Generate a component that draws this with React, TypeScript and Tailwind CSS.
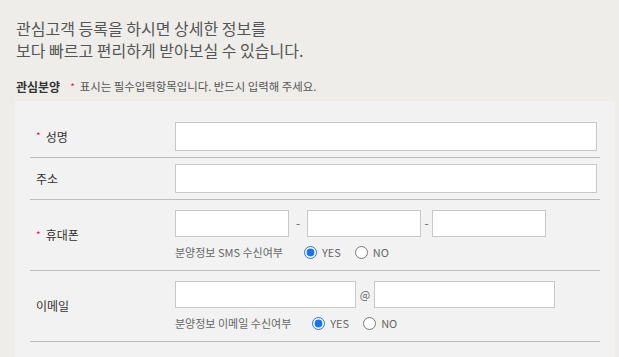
import React from 'react';

const font = { fontFamily: '"Noto Sans CJK KR", "Noto Sans", sans-serif' };

const Star = () => <span className="text-[#e5185c] text-[10px] mr-[5px] relative top-[-1px]">*</span>;

const Input = ({ w }: { w: string }) => (
  <input type="text" className={`${w} h-[27px] bg-white border border-[#c8c8c8] outline-none`} />
);

const Consent = ({ label, name }: { label: string; name: string }) => (
  <div className="flex items-center h-[17px] mt-[7px] text-[11px] text-[#666]">
    <span className="mr-[21px]">{label}</span>
    <label className="flex items-center mr-[14px]">
      <input type="radio" name={name} defaultChecked className="w-[13px] h-[13px] m-0 mr-[5px] accent-[#1a73e8]" />
      YES
    </label>
    <label className="flex items-center">
      <input type="radio" name={name} className="w-[13px] h-[13px] m-0 mr-[5px]" />
      NO
    </label>
  </div>
);

export default function App() {
  return (
    <div className="w-[619px] h-[357px] overflow-hidden bg-[#eeede9]" style={font}>
      <div className="pt-[17px] pl-[16px] text-[16px] text-[#555]">
        <div className="h-[22px] leading-[22px]">관심고객 등록을 하시면 상세한 정보를</div>
        <div className="h-[22px] leading-[22px]">보다 빠르고 편리하게 받아보실 수 있습니다.</div>
      </div>
      <div className="flex items-center pl-[16px] mt-[17px] h-[18px]">
        <span className="text-[12px] font-bold text-[#333] mr-[10px]">관심분양</span>
        <Star />
        <span className="text-[11.4px] text-[#555]">표시는 필수입력항목입니다. 반드시 입력해 주세요.</span>
      </div>
      <div className="ml-[15px] w-[600px] mt-[5px] h-[260px] bg-[#f2f2f2] pt-[15px] pl-[15px] pr-[15px]">
        <div className="flex items-center h-[42px] border-b border-[#bdbdbd]">
          <div className="w-[145px] pl-[6px] text-[12px] text-[#333] flex items-center"><Star />성명</div>
          <input type="text" className="w-[422px] h-[29px] bg-white border border-[#c8c8c8] outline-none" />
        </div>
        <div className="flex items-center h-[42px] border-b border-[#bdbdbd]">
          <div className="w-[145px] pl-[6px] text-[12px] text-[#333]">주소</div>
          <input type="text" className="w-[422px] h-[29px] bg-white border border-[#c8c8c8] outline-none" />
        </div>
        <div className="flex items-center h-[71px] border-b border-[#bdbdbd]">
          <div className="w-[145px] pl-[6px] text-[12px] text-[#333] flex items-center"><Star />휴대폰</div>
          <div className="flex flex-col">
            <div className="flex items-center text-[12px] text-[#666]">
              <Input w="w-[114px]" />
              <span className="w-[18px] text-center">-</span>
              <Input w="w-[114px]" />
              <span className="w-[11px] text-center">-</span>
              <Input w="w-[114px]" />
            </div>
            <Consent label="분양정보 SMS 수신여부" name="sms" />
          </div>
        </div>
        <div className="flex items-center h-[71px] border-b border-[#bdbdbd]">
          <div className="w-[145px] pl-[6px] text-[12px] text-[#333]">이메일</div>
          <div className="flex flex-col">
            <div className="flex items-center text-[11px] text-[#666]">
              <Input w="w-[181px]" />
              <span className="w-[18px] text-center">@</span>
              <Input w="w-[181px]" />
            </div>
            <Consent label="분양정보 이메일 수신여부" name="email" />
          </div>
        </div>
      </div>
    </div>
  );
}
